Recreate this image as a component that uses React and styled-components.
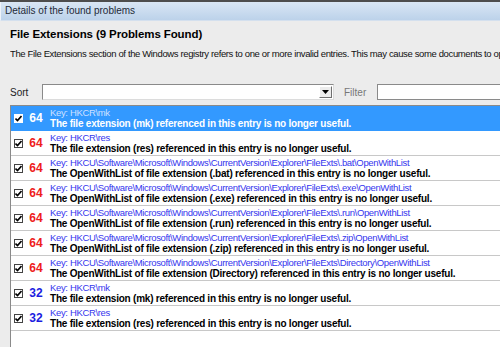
import React from 'react';
import styled, { createGlobalStyle } from 'styled-components';

const GlobalStyle = createGlobalStyle`
	html, body {
		margin: 0;
		padding: 0;
		background: #ececec;
		overflow: hidden;
	}
	#root {
		width: 500px;
		height: 347px;
	}
`;

const problems = [
	{ score: 64, key: 'HKCR\\mk', text: 'The file extension (mk) referenced in this entry is no longer useful.' },
	{ score: 64, key: 'HKCR\\res', text: 'The file extension (res) referenced in this entry is no longer useful.' },
	{ score: 64, key: 'HKCU\\Software\\Microsoft\\Windows\\CurrentVersion\\Explorer\\FileExts\\.bat\\OpenWithList', text: 'The OpenWithList of file extension (.bat) referenced in this entry is no longer useful.' },
	{ score: 64, key: 'HKCU\\Software\\Microsoft\\Windows\\CurrentVersion\\Explorer\\FileExts\\.exe\\OpenWithList', text: 'The OpenWithList of file extension (.exe) referenced in this entry is no longer useful.' },
	{ score: 64, key: 'HKCU\\Software\\Microsoft\\Windows\\CurrentVersion\\Explorer\\FileExts\\.run\\OpenWithList', text: 'The OpenWithList of file extension (.run) referenced in this entry is no longer useful.' },
	{ score: 64, key: 'HKCU\\Software\\Microsoft\\Windows\\CurrentVersion\\Explorer\\FileExts\\.zip\\OpenWithList', text: 'The OpenWithList of file extension (.zip) referenced in this entry is no longer useful.' },
	{ score: 64, key: 'HKCU\\Software\\Microsoft\\Windows\\CurrentVersion\\Explorer\\FileExts\\Directory\\OpenWithList', text: 'The OpenWithList of file extension (Directory) referenced in this entry is no longer useful.' },
	{ score: 32, key: 'HKCR\\mk', text: 'The file extension (mk) referenced in this entry is no longer useful.' },
	{ score: 32, key: 'HKCR\\res', text: 'The file extension (res) referenced in this entry is no longer useful.' },
];

export default function App() {
	return (
		<>
			<GlobalStyle />
			<Window>
				<TitleBar>Details of the found problems</TitleBar>
				<Body>
					<Heading>File Extensions (9 Problems Found)</Heading>
					<Description>
						The File Extensions section of the Windows registry refers to one or more invalid entries. This may cause some documents to open incorrectly.
					</Description>
					<Toolbar>
						<Label>Sort</Label>
						<Combo>
							<DropButton>
								<svg width="7" height="4" viewBox="0 0 7 4">
									<path d="M0 0 H7 L3.5 4 Z" fill="#000" />
								</svg>
							</DropButton>
						</Combo>
						<Label $muted>Filter</Label>
						<FilterInput />
					</Toolbar>
					<List>
						{problems.map((p, i) => (
							<Row key={i} $selected={i === 0}>
								<Check $selected={i === 0}>
									<svg width="7" height="7" viewBox="0 0 7 7">
										<path d="M0.5 3.5 L2.5 5.5 L6.5 1" stroke="#000" strokeWidth="1.6" fill="none" />
									</svg>
								</Check>
								<Score $high={p.score > 50} $selected={i === 0}>{p.score}</Score>
								<Texts>
									<KeyLine $selected={i === 0}>Key: {p.key}</KeyLine>
									<Message $selected={i === 0}>{p.text}</Message>
								</Texts>
							</Row>
						))}
					</List>
				</Body>
			</Window>
		</>
	);
}

const Window = styled.div`
	width: 500px;
	height: 347px;
	display: flex;
	flex-direction: column;
	border-top: 2px solid #4d4d4d;
	box-sizing: border-box;
	font-family: 'Liberation Sans', Arial, sans-serif;
	color: #111;
`;

const TitleBar = styled.div`
	height: 18px;
	line-height: 18px;
	padding-left: 4px;
	font-size: 10px;
	color: #1e2a38;
	background: linear-gradient(#d9e6f4, #bcd2ea);
	border-left: 1px solid #eef3f9;
	border-bottom: 1px solid #d4e0ee;
	white-space: nowrap;
`;

const Body = styled.div`
	flex: 1;
	display: flex;
	flex-direction: column;
	padding: 6px 0 0 10px;
	min-height: 0;
`;

const Heading = styled.div`
	font-weight: bold;
	font-size: 11.5px;
	letter-spacing: -0.1px;
	line-height: 14px;
	color: #000;
	white-space: nowrap;
`;

const Description = styled.div`
	margin-top: 6px;
	font-size: 9.5px;
	letter-spacing: -0.37px;
	line-height: 14px;
	white-space: nowrap;
	overflow: hidden;
	color: #111;
`;

const Toolbar = styled.div`
	margin-top: 23px;
	display: flex;
	align-items: center;
	height: 16px;
`;

const Label = styled.span`
	font-size: 10px;
	width: ${(p) => (p.$muted ? '31px' : '32px')};
	color: ${(p) => (p.$muted ? '#777' : '#222')};
	padding-left: ${(p) => (p.$muted ? '1px' : '0')};
`;

const Combo = styled.div`
	width: 292px;
	height: 16px;
	box-sizing: border-box;
	background: #fff;
	border: 1px solid #8a8a8a;
	border-right-color: #dcdcdc;
	border-bottom-color: #dcdcdc;
	display: flex;
	justify-content: flex-end;
	padding: 1px;
	margin-right: 9px;
`;

const DropButton = styled.div`
	width: 13px;
	height: 12px;
	background: #ececec;
	border: 1px solid #fff;
	border-right-color: #707070;
	border-bottom-color: #707070;
	box-sizing: border-box;
	display: flex;
	align-items: center;
	justify-content: center;
`;

const FilterInput = styled.div`
	flex: 1;
	height: 16px;
	box-sizing: border-box;
	background: #fff;
	border: 1px solid #8a8a8a;
	border-right: none;
	margin-left: 2px;
`;

const List = styled.div`
	margin-top: 5px;
	flex: 1;
	background: #fff;
	border-left: 1px solid #8a8a8a;
	border-top: 1px solid #8a8a8a;
	display: flex;
	flex-direction: column;
`;

const Row = styled.div`
	height: 25px;
	box-sizing: border-box;
	display: flex;
	align-items: center;
	background: ${(p) => (p.$selected ? '#3399ff' : '#fff')};
	border-bottom: 1px solid ${(p) => (p.$selected ? '#3399ff' : '#c8c8c8')};
	white-space: nowrap;
	overflow: hidden;
`;

const Check = styled.div`
	width: 9px;
	height: 9px;
	box-sizing: border-box;
	margin-left: 3px;
	background: #fff;
	border: 1px solid ${(p) => (p.$selected ? '#fff' : '#444')};
	display: flex;
	align-items: center;
	justify-content: center;
`;

const Score = styled.div`
	width: 26px;
	text-align: center;
	font-weight: bold;
	font-size: 12px;
	color: ${(p) => (p.$selected ? '#fff' : p.$high ? '#ee1c1c' : '#1c1ce0')};
`;

const Texts = styled.div`
	display: flex;
	flex-direction: column;
	padding-left: 1px;
`;

const KeyLine = styled.div`
	font-size: 9.5px;
	letter-spacing: -0.35px;
	line-height: 11px;
	color: ${(p) => (p.$selected ? '#cfe0ff' : '#3535ee')};
`;

const Message = styled.div`
	font-size: 10px;
	letter-spacing: -0.22px;
	line-height: 12px;
	font-weight: bold;
	color: ${(p) => (p.$selected ? '#fff' : '#000')};
`;
